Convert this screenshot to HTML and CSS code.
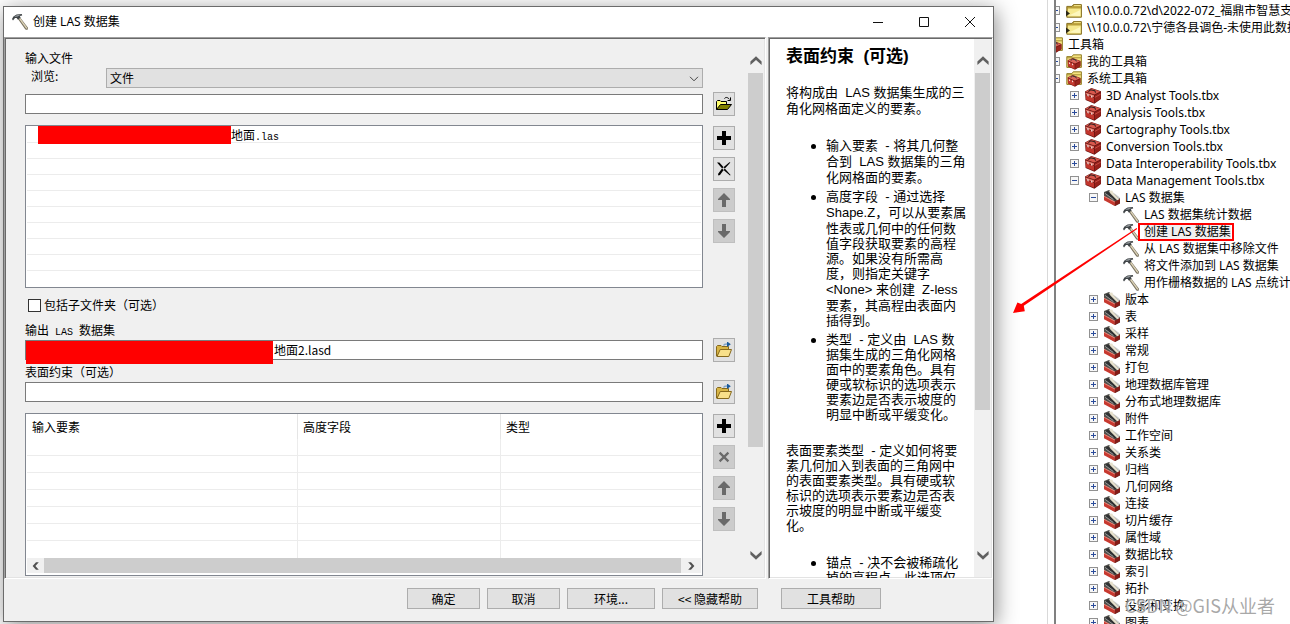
FILE: index.html
```html
<!DOCTYPE html>
<html lang="zh-CN">
<head>
<meta charset="utf-8">
<title>创建 LAS 数据集</title>
<link rel="stylesheet" href="styles.css">
</head>
<body>
<svg class="defs" aria-hidden="true">
  <symbol id="hammer" viewBox="0 0 16 16">
    <path d="M5.6 4.4 7.8 3 16 13.8 15.4 16 13.4 15.6Z" fill="#77705f"/>
    <path d="M6.8 4.4 7.8 3.6 15.2 13.8 14.4 15Z" fill="#ddd4b8"/>
    <path d="M0 5 1.4 2.4 4.6.4 9.8 0 10.2 1.4 7.8 2 8.6 3.6 6 5.8 4.6 4 3 4 1 6.6Z" fill="#3f4447"/>
    <path d="M2 3 4.8 1.2 8.6.8 5.8 2.4Z" fill="#9aa0a3"/>
  </symbol>
  <symbol id="toolbox" viewBox="0 0 16 16">
    <path d="M0 3.6 6.4 0 16 3.2V11L9.4 15.8 .6 12Z" fill="#6c1512"/>
    <path d="M.6 3.6 6.4.6 15.4 3.4 9.2 6.4Z" fill="#d9574c"/>
    <path d="M.6 4.4 9 7.2V9.2L.8 6.2Z" fill="#e07468"/>
    <path d="M.8 7 9 10V14.8L1 11.6Z" fill="#c2352c"/>
    <path d="M9.8 7.2 15.6 4.4V10.8L9.8 14.8Z" fill="#98211b"/>
    <path d="M9.8 9.4 15.6 6.2" stroke="#d0584e" stroke-width=".8"/>
    <path d="M3.4 3.6 5.4 1.8 9.8 2.8 10.6 4.6" fill="none" stroke="#332020" stroke-width="1.1"/>
    <path d="M2.4 6 3.6 6.4V8.4L2.4 8Z" fill="#fff1ee"/>
    <path d="M6.2 7.4 7.4 7.8V9.8L6.2 9.4Z" fill="#fff1ee"/>
  </symbol>
  <symbol id="toolset" viewBox="0 0 16 16">
    <path d="M0 2 5 0 16 8.4V13.4L11 16 0 9Z" fill="#51504c"/>
    <path d="M1 3 4 1.4 13 9.6 11 10.6Z" fill="#2f3132"/>
    <path d="M5 1 8.2.6 9.6 3.2 15.4 9.2 13.4 10.6 6.4 3.6Z" fill="#e6e0cc"/>
    <path d="M9 2.2 15.6 7.2 15 9Z" fill="#c9cccd"/>
    <path d="M1.2 3.4 9.4 9.6" stroke="#9b9d9d" stroke-width="1"/>
    <path d="M0 6.2 10.8 12V16L0 10.2Z" fill="#c7392f"/>
    <path d="M0 5.8 10.8 11.6V12.6L0 6.8Z" fill="#ee8b7f"/>
    <path d="M11 11.6 16 9V13.2L11 16Z" fill="#851c17"/>
  </symbol>
  <symbol id="folder" viewBox="0 0 16 16">
    <path d="M.8 3.4H6L7.4 1.6H15.4V14.2H.8Z" fill="#b99f3a" stroke="#877123" stroke-width="1"/>
    <path d="M8 2.6H14.8" stroke="#f6e68b"/>
    <path d="M2 5.4H14.8V13.6H1.4Z" fill="#f6e98f"/>
    <path d="M3 12.6 14.2 7V13Z" fill="#fdf7bd"/>
    <path d="M0 7.6 4 10.4 0 13.2Z" fill="#2b2717"/>
  </symbol>
  <symbol id="boxfolder" viewBox="0 0 16 16">
    <path d="M.8 2.6H6L7.2.8H15.4V13.4H.8Z" fill="#f4e27f" stroke="#94802a" stroke-width="1"/>
    <path d="M1 3.8H15" stroke="#a58f32"/>
    <path d="M1.6 6.2 6.8 4 14.6 7V12.2L9 15.8 2 12.4Z" fill="#7c1814"/>
    <path d="M2 6.4 6.8 4.6 14 7.2 9 9.6Z" fill="#de675c"/>
    <path d="M2 7.6 8.6 10.4V15L2.2 12Z" fill="#c43a31"/>
    <path d="M9.4 10.4 14.2 8V12L9.4 15Z" fill="#9a241d"/>
    <path d="M4.8 6.4 6.6 5 9.8 6 10.4 7.4" fill="none" stroke="#333"/>
    <path d="M3.6 8.4V10M6.6 9.6V11.2" stroke="#fbe5e1"/>
  </symbol>
  <symbol id="browse" viewBox="0 0 18 16">
    <path d="M1.5 14V4.5L2.5 3.5H6L7 4.5H13.5V7.5H7L2 14Z" fill="#d8b545" stroke="#86691c"/>
    <path d="M2 14.5 5.2 7.5H16.5L13.8 14.5Z" fill="#f8e08a" stroke="#86691c"/>
    <path d="M8.5 3.5C9.2 1.8 10.5 2 12.5 2" fill="none" stroke="#7fa3c8" stroke-width="1.4"/>
    <path d="M12-.6 15.8 2.2 12 5Z" fill="#195a9c"/>
  </symbol>
  <symbol id="open" viewBox="0 0 18 16">
    <path d="M1.5 13.5V5.5L2.5 4.5H5L6 5.5H11.5V8.5" fill="#ffff6e" stroke="#000"/>
    <path d="M1.5 13.5 5.5 8.5H16.5L12.5 13.5Z" fill="#808000" stroke="#000"/>
    <path d="M9.5 2.5C10.6 1 12.6 1 14.5 3.4M15.5 1.4V4.5H12.6" fill="none" stroke="#000"/>
  </symbol>
  <symbol id="plus" viewBox="0 0 14 14"><path d="M5 0H9V5H14V9H9V14H5V9H0V5H5Z" fill="currentColor"/></symbol>
  <symbol id="cross" viewBox="0 0 14 14">
    <path d="M0 .6H2.4L13.6 13 13 13.6 6 7.6Z M13.4.4 12.4.2 5 6.6 1 12 1.4 13.4 3 13 7 7.6Z" fill="currentColor"/>
  </symbol>
  <symbol id="cross-small" viewBox="0 0 14 14"><path d="M2.6 2.6 11.4 11.4M11.4 2.6 2.6 11.4" stroke="currentColor" stroke-width="2.2"/></symbol>
  <symbol id="up" viewBox="0 0 14 14"><path d="M7 0 13 6V7H9V14H5V7H1V6Z" fill="currentColor"/></symbol>
  <symbol id="down" viewBox="0 0 14 14"><path d="M7 14 13 8V7H9V0H5V7H1V8Z" fill="currentColor"/></symbol>
  <symbol id="chev-up" viewBox="0 0 12 9"><path d="M.4 9V5.6L6 .2 11.6 5.6V9L6 4Z" fill="#606060"/></symbol>
  <symbol id="chev-down" viewBox="0 0 12 9"><path d="M.4 0V3.4L6 8.8 11.6 3.4V0L6 5Z" fill="#606060"/></symbol>
  <symbol id="chev-left" viewBox="0 0 8 8"><path d="M6.8.2H4L.6 4 4 7.8H6.8L3.4 4Z" fill="#505050"/></symbol>
  <symbol id="chev-right" viewBox="0 0 8 8"><path d="M1.2.2H4L7.4 4 4 7.8H1.2L4.6 4Z" fill="#505050"/></symbol>
</svg>

<main class="page">
  <section class="dialog" aria-label="创建 LAS 数据集">
    <header class="titlebar">
      <svg class="title-icon"><use href="#hammer"/></svg>
      <h1>创建 LAS 数据集</h1>
      <button class="win-btn" aria-label="最小化"><svg viewBox="0 0 12 12"><path d="M1 6.5H11"/></svg></button>
      <button class="win-btn" aria-label="最大化"><svg viewBox="0 0 12 12"><path d="M1.5 1.5H10.5V10.5H1.5Z"/></svg></button>
      <button class="win-btn" aria-label="关闭"><svg viewBox="0 0 12 12"><path d="M1 1 11 11M11 1 1 11"/></svg></button>
    </header>

    <div class="panes">
      <div class="pane form-pane">
        <form class="form" id="las-form">
          <div class="label">输入文件</div>
          <div class="browse-line">
            <label for="browse-type">浏览:</label>
            <div class="select-wrap">
              <select id="browse-type"><option>文件</option></select>
              <svg viewBox="0 0 10 6"><path d="M1 .8 5 4.8 9 .8"/></svg>
            </div>
          </div>
          <div class="field-row">
            <input type="text" aria-label="输入文件路径">
            <button type="button" class="tool" aria-label="浏览"><svg class="wide"><use href="#open"/></svg></button>
          </div>
          <div class="list-row">
            <ul class="file-list">
              <li><span class="redact list-redact"></span>地面<span class="half">.las</span></li>
              <li></li><li></li><li></li><li></li><li></li><li></li><li></li><li></li>
            </ul>
            <div class="tools">
              <button type="button" class="tool" aria-label="添加"><svg><use href="#plus"/></svg></button>
              <button type="button" class="tool" aria-label="移除"><svg><use href="#cross"/></svg></button>
              <button type="button" class="tool" aria-label="上移" disabled><svg><use href="#up"/></svg></button>
              <button type="button" class="tool" aria-label="下移" disabled><svg><use href="#down"/></svg></button>
            </div>
          </div>
          <label class="check"><input type="checkbox">包括子文件夹（可选）</label>
          <label class="label" for="output">输出<span class="half"> LAS </span>数据集</label>
          <div class="field-row">
            <div class="output-wrap">
              <input type="text" id="output" class="output" value="地面2.lasd">
              <span class="redact output-redact"></span>
            </div>
            <button type="button" class="tool" aria-label="浏览输出"><svg class="wide"><use href="#browse"/></svg></button>
          </div>
          <label class="label" for="surface">表面约束（可选）</label>
          <div class="field-row">
            <input type="text" id="surface">
            <button type="button" class="tool" aria-label="浏览表面"><svg class="wide"><use href="#browse"/></svg></button>
          </div>
          <div class="list-row">
            <div class="grid-box">
              <table>
                <colgroup><col class="c1"><col class="c2"><col></colgroup>
                <thead><tr><th>输入要素</th><th>高度字段</th><th>类型</th></tr></thead>
                <tbody>
                  <tr><td></td><td></td><td></td></tr><tr><td></td><td></td><td></td></tr>
                  <tr><td></td><td></td><td></td></tr><tr><td></td><td></td><td></td></tr>
                  <tr><td></td><td></td><td></td></tr><tr><td></td><td></td><td></td></tr>
                  <tr><td></td><td></td><td></td></tr>
                </tbody>
              </table>
              <div class="hscroll">
                <button type="button" aria-label="向左"><svg><use href="#chev-left"/></svg></button>
                <span class="hthumb"></span>
                <button type="button" aria-label="向右"><svg><use href="#chev-right"/></svg></button>
              </div>
            </div>
            <div class="tools">
              <button type="button" class="tool" aria-label="添加"><svg><use href="#plus"/></svg></button>
              <button type="button" class="tool" aria-label="移除" disabled><svg><use href="#cross-small"/></svg></button>
              <button type="button" class="tool" aria-label="上移" disabled><svg><use href="#up"/></svg></button>
              <button type="button" class="tool" aria-label="下移" disabled><svg><use href="#down"/></svg></button>
            </div>
          </div>
        </form>
        <div class="vscroll">
          <button aria-label="向上滚动"><svg><use href="#chev-up"/></svg></button>
          <div class="track"><div class="thumb form-thumb"></div></div>
          <button aria-label="向下滚动"><svg><use href="#chev-down"/></svg></button>
        </div>
      </div>

      <aside class="pane help-pane">
        <div class="help">
          <h2>表面约束&nbsp; (可选)</h2>
          <p>将构成由&nbsp; <span class="lat">LAS</span> 数据集生成的三<br>角化网格面定义的要素。</p>
          <ul>
            <li>输入要素&nbsp; - 将其几何整<br>合到&nbsp; <span class="lat">LAS</span> 数据集的三角<br>化网格面的要素。</li>
            <li>高度字段&nbsp; - 通过选择<br><span class="lat">Shape.Z</span>，可以从要素属<br>性表或几何中的任何数<br>值字段获取要素的高程<br>源。如果没有所需高<br>度，则指定关键字<br><span class="lat">&lt;None&gt;</span> 来创建&nbsp; <span class="lat">Z-less</span><br>要素，其高程由表面内<br>插得到。</li>
            <li>类型&nbsp; - 定义由&nbsp; LAS 数<br>据集生成的三角化网格<br>面中的要素角色。具有<br>硬或软标识的选项表示<br>要素边是否表示坡度的<br>明显中断或平缓变化。</li>
          </ul>
          <p>表面要素类型&nbsp; - 定义如何将要<br>素几何加入到表面的三角网中<br>的表面要素类型。具有硬或软<br>标识的选项表示要素边是否表<br>示坡度的明显中断或平缓变<br>化。</p>
          <ul>
            <li>锚点&nbsp; - 决不会被稀疏化<br>掉的高程点。此选项仅</li>
          </ul>
        </div>
        <div class="vscroll">
          <button aria-label="向上滚动"><svg><use href="#chev-up"/></svg></button>
          <div class="track"><div class="thumb help-thumb"></div></div>
          <button aria-label="向下滚动"><svg><use href="#chev-down"/></svg></button>
        </div>
      </aside>
    </div>

    <footer class="footer">
      <button class="cmd small">确定</button>
      <button class="cmd small">取消</button>
      <button class="cmd env">环境...</button>
      <button class="cmd hide">&lt;&lt; 隐藏帮助</button>
      <button class="cmd help-btn">工具帮助</button>
    </footer>
  </section>

  <div class="gutter"></div>

  <nav class="catalog" aria-label="目录树">
    <ul class="tree">
      <li><div class="row"><button class="exp plus" aria-label="展开"></button><svg><use href="#folder"/></svg><span>\\10.0.0.72\d\2022-072_福鼎市智慧支</span></div></li>
      <li><div class="row"><button class="exp plus" aria-label="展开"></button><svg><use href="#folder"/></svg><span>\\10.0.0.72\宁德各县调色-未使用此数据</span></div></li>
      <li class="root"><div class="row"><button class="exp" aria-label="折叠"></button><svg><use href="#boxfolder"/></svg><span>工具箱</span></div></li>
      <li><div class="row"><button class="exp plus" aria-label="展开"></button><svg><use href="#boxfolder"/></svg><span>我的工具箱</span></div></li>
      <li><div class="row"><button class="exp" aria-label="折叠"></button><svg><use href="#boxfolder"/></svg><span>系统工具箱</span></div>
        <ul>
          <li><div class="row"><button class="exp plus" aria-label="展开"></button><svg><use href="#toolbox"/></svg><span>3D Analyst Tools.tbx</span></div></li>
          <li><div class="row"><button class="exp plus" aria-label="展开"></button><svg><use href="#toolbox"/></svg><span>Analysis Tools.tbx</span></div></li>
          <li><div class="row"><button class="exp plus" aria-label="展开"></button><svg><use href="#toolbox"/></svg><span>Cartography Tools.tbx</span></div></li>
          <li><div class="row"><button class="exp plus" aria-label="展开"></button><svg><use href="#toolbox"/></svg><span>Conversion Tools.tbx</span></div></li>
          <li><div class="row"><button class="exp plus" aria-label="展开"></button><svg><use href="#toolbox"/></svg><span>Data Interoperability Tools.tbx</span></div></li>
          <li><div class="row"><button class="exp" aria-label="折叠"></button><svg><use href="#toolbox"/></svg><span>Data Management Tools.tbx</span></div>
            <ul>
              <li><div class="row"><button class="exp" aria-label="折叠"></button><svg><use href="#toolset"/></svg><span>LAS 数据集</span></div>
                <ul>
                  <li><div class="row leaf"><svg><use href="#hammer"/></svg><span>LAS 数据集统计数据</span></div></li>
                  <li><div class="row leaf"><svg><use href="#hammer"/></svg><span class="selected">创建 LAS 数据集</span></div></li>
                  <li><div class="row leaf"><svg><use href="#hammer"/></svg><span>从 LAS 数据集中移除文件</span></div></li>
                  <li><div class="row leaf"><svg><use href="#hammer"/></svg><span>将文件添加到 LAS 数据集</span></div></li>
                  <li><div class="row leaf"><svg><use href="#hammer"/></svg><span>用作栅格数据的 LAS 点统计</span></div></li>
                </ul>
              </li>
              <li><div class="row"><button class="exp plus" aria-label="展开"></button><svg><use href="#toolset"/></svg><span>版本</span></div></li>
              <li><div class="row"><button class="exp plus" aria-label="展开"></button><svg><use href="#toolset"/></svg><span>表</span></div></li>
              <li><div class="row"><button class="exp plus" aria-label="展开"></button><svg><use href="#toolset"/></svg><span>采样</span></div></li>
              <li><div class="row"><button class="exp plus" aria-label="展开"></button><svg><use href="#toolset"/></svg><span>常规</span></div></li>
              <li><div class="row"><button class="exp plus" aria-label="展开"></button><svg><use href="#toolset"/></svg><span>打包</span></div></li>
              <li><div class="row"><button class="exp plus" aria-label="展开"></button><svg><use href="#toolset"/></svg><span>地理数据库管理</span></div></li>
              <li><div class="row"><button class="exp plus" aria-label="展开"></button><svg><use href="#toolset"/></svg><span>分布式地理数据库</span></div></li>
              <li><div class="row"><button class="exp plus" aria-label="展开"></button><svg><use href="#toolset"/></svg><span>附件</span></div></li>
              <li><div class="row"><button class="exp plus" aria-label="展开"></button><svg><use href="#toolset"/></svg><span>工作空间</span></div></li>
              <li><div class="row"><button class="exp plus" aria-label="展开"></button><svg><use href="#toolset"/></svg><span>关系类</span></div></li>
              <li><div class="row"><button class="exp plus" aria-label="展开"></button><svg><use href="#toolset"/></svg><span>归档</span></div></li>
              <li><div class="row"><button class="exp plus" aria-label="展开"></button><svg><use href="#toolset"/></svg><span>几何网络</span></div></li>
              <li><div class="row"><button class="exp plus" aria-label="展开"></button><svg><use href="#toolset"/></svg><span>连接</span></div></li>
              <li><div class="row"><button class="exp plus" aria-label="展开"></button><svg><use href="#toolset"/></svg><span>切片缓存</span></div></li>
              <li><div class="row"><button class="exp plus" aria-label="展开"></button><svg><use href="#toolset"/></svg><span>属性域</span></div></li>
              <li><div class="row"><button class="exp plus" aria-label="展开"></button><svg><use href="#toolset"/></svg><span>数据比较</span></div></li>
              <li><div class="row"><button class="exp plus" aria-label="展开"></button><svg><use href="#toolset"/></svg><span>索引</span></div></li>
              <li><div class="row"><button class="exp plus" aria-label="展开"></button><svg><use href="#toolset"/></svg><span>拓扑</span></div></li>
              <li><div class="row"><button class="exp plus" aria-label="展开"></button><svg><use href="#toolset"/></svg><span>投影和变换</span></div></li>
              <li><div class="row"><button class="exp plus" aria-label="展开"></button><svg><use href="#toolset"/></svg><span>图表</span></div></li>
            </ul>
          </li>
        </ul>
      </li>
    </ul>
  </nav>

  <svg class="arrow" viewBox="0 0 126 88" aria-hidden="true">
    <path d="M124.6 3 125.2 4 11.8 80.8 12.8 86.2 1 88 5.4 77.6 9.2 79Z" fill="#f00"/>
  </svg>
  <div class="watermark">CSDN @GIS从业者</div>
</main>
</body>
</html>
```

FILE: styles.css
```css
* { box-sizing: border-box; }
body {
  margin: 0;
  background: #fff;
  color: #000;
  font: 12px/16px "Noto Sans CJK SC", sans-serif;
}
button, input, select { font: inherit; color: inherit; margin: 0; padding: 0; border-radius: 0; }
button { border: 0; background: none; }
ul { list-style: none; margin: 0; padding: 0; }
h1, h2, p { margin: 0; }
svg { display: block; flex: none; }
.defs { position: absolute; width: 0; height: 0; }

.page {
  position: relative;
  display: grid;
  grid-template-columns: minmax(0, 1fr) 54px 242px;
  grid-template-rows: minmax(0, 1fr);
  height: 100vh;
  overflow: hidden;
}

/* dialog window */
.dialog {
  display: flex;
  flex-direction: column;
  margin: 6px 0 2px 3px;
  border: 1px solid #6b6b6b;
  background: #f0f0f0;
  box-shadow: 2px 4px 20px rgba(0, 0, 0, .45);
}
.titlebar {
  flex: none;
  display: flex;
  align-items: center;
  height: 30px;
  padding-left: 8px;
  background: #fff;
}
.title-icon { width: 16px; height: 16px; margin-right: 5px; }
.titlebar h1 { flex: 1; font: 12px/16px "Noto Sans", "Noto Sans CJK SC", sans-serif; }
.win-btn { display: flex; justify-content: center; width: 46px; }
.win-btn svg { width: 12px; height: 12px; fill: none; stroke: #111; }

.panes {
  flex: 1;
  min-height: 0;
  display: grid;
  grid-template-columns: minmax(0, 1fr) 225px;
  grid-template-rows: minmax(0, 1fr);
  gap: 2px;
}
.pane {
  display: flex;
  min-height: 0;
  overflow: hidden;
  border: 1px solid;
  border-color: #a0a0a0 #fff #fff #a0a0a0;
  box-shadow: inset 1px 1px #696969, inset -1px -1px #e3e3e3;
}
.form {
  flex: 1;
  min-width: 0;
  display: flex;
  flex-direction: column;
  padding: 12px 13px 0 20px;
}
.label { display: block; height: 16px; }
.half { font-family: "Liberation Mono", monospace; font-size: 10px; white-space: pre; }
.browse-line { display: flex; margin: 2px 32px 4px 6px; }
.browse-line label { width: 75px; }
.select-wrap { position: relative; flex: 1; }
.select-wrap select {
  display: block;
  width: 100%;
  height: 20px;
  padding-left: 3px;
  border: 1px solid #adadad;
  background: #e1e1e1;
  appearance: none;
}
.select-wrap svg {
  position: absolute;
  right: 4px;
  top: 8px;
  width: 10px;
  height: 6px;
  fill: none;
  stroke: #444;
  pointer-events: none;
}
.field-row { display: grid; grid-template-columns: minmax(0, 1fr) 22px; gap: 10px; align-items: center; margin-bottom: 9px; }
.field-row input {
  display: block;
  width: 100%;
  height: 20px;
  padding: 0 3px;
  border: 1px solid #7a7a7a;
  background: #fff;
}
.output-wrap { position: relative; }
.field-row .output { padding: 0 3px 2px 248px; }
.field-row:has(.output) { margin-bottom: 2px; }
.redact { background: #f00; position: absolute; }
.output-redact { left: 1px; top: 1px; width: 247px; height: 23px; }
.tool {
  display: flex;
  align-items: center;
  justify-content: center;
  width: 22px;
  height: 24px;
  border: 1px solid #adadad;
  background: #e1e1e1;
}
.tool:disabled { background: #ccc; border-color: #bfbfbf; color: #6a6a6a; }
.tool svg { width: 14px; height: 14px; }
.tool svg.wide { width: 18px; height: 16px; overflow: visible; }
.list-row { display: grid; grid-template-columns: minmax(0, 1fr) 22px; gap: 10px; height: 163px; }
.tools { display: flex; flex-direction: column; gap: 7px; padding-top: 1px; }
.file-list {
  padding: 0 1px;
  border: 1px solid #828790;
  background: #fff;
}
.file-list li { height: 16px; border-bottom: 1px solid #ececec; }
.file-list li:first-child { position: relative; height: 17px; padding-left: 204px; line-height: 18px; }
.list-redact { left: 11px; top: 0; width: 193px; height: 18px; }
.check { display: flex; align-items: center; height: 14px; margin: 10px 0 10px 3px; }
.check input { appearance: none; width: 13px; height: 13px; margin-right: 3px; border: 1px solid #333; background: #fff; }

.grid-box { padding: 0 1px; border: 1px solid #828790; background: #fff; overflow: hidden; }
.grid-box table { width: 100%; table-layout: fixed; border-collapse: separate; border-spacing: 0; }
.c1 { width: 271px; }
.c2 { width: 203px; }
th { height: 25px; padding: 0 0 0 5px; text-align: left; font-weight: 400; border-right: 1px solid #e5e5e5; }
td { height: 17px; padding: 0; border-right: 1px solid #ececec; border-bottom: 1px solid #ececec; }
th:last-child, td:last-child { border-right: 0; }
tbody tr:last-child td { border-bottom: 0; }
.hscroll { display: flex; height: 15px; background: #f0f0f0; }
.hscroll button { display: flex; align-items: center; justify-content: center; width: 17px; }
.hscroll button:last-child { width: 20px; }
.hscroll svg { width: 8px; height: 8px; }
.hthumb { flex: 1; background: #cdcdcd; }

.vscroll { flex: none; display: flex; flex-direction: column; width: 17px; margin: 1px 0; padding: 13px 2px 13px 0; background: #f0f0f0; }
.vscroll button { display: flex; align-items: center; justify-content: center; width: 15px; height: 17px; }
.vscroll svg { width: 12px; height: 9px; }
.track { flex: 1; padding: 4px 0 0; }
.thumb { background: #cdcdcd; }
.form-pane .vscroll { margin-right: 1px; width: 16px; padding-right: 1px; }
.form-thumb { height: 79%; }
.help-thumb { height: 71%; }

/* help text */
.help-pane { background: #fff; }
.help-pane .vscroll { margin-right: 1px; padding: 13px 1px; }
.help { flex: 1; min-width: 0; padding: 9px 0 0 17px; overflow: hidden; white-space: nowrap; font: 13px/15px "Liberation Sans", "Noto Sans CJK SC", sans-serif; }
.help h2 { font-size: 17px; line-height: 20px; font-weight: 700; margin-bottom: 17px; }
.help p { margin-bottom: 22px; }
.help ul { margin-bottom: 21px; padding-left: 40px; }
.help li { position: relative; margin-bottom: 4px; }
.help li::before { content: ""; position: absolute; left: -15px; top: 6px; width: 5px; height: 5px; border-radius: 50%; background: #000; }
.lat { line-height: 17px; }

.footer { flex: none; display: flex; justify-content: flex-end; gap: 7px; height: 42px; padding: 9px 112px 0 0; }
.cmd { height: 21px; border: 1px solid #adadad; background: #e1e1e1; line-height: 18px; }
.small { width: 73px; }
.env { width: 88px; }
.hide { width: 96px; }
.help-btn { width: 100px; margin-left: 16px; }

/* catalog tree */
.gutter { border-right: 1px solid #d9d9d9; }
.catalog {
  margin-left: 6px;
  border-left: 2px solid #808080;
  overflow: hidden;
  background: #fff;
  font: 12px/17px "Noto Sans", "Noto Sans CJK SC", sans-serif;
  white-space: nowrap;
}
.tree { margin: 2px 0 0 -5px; }
.tree ul { padding-left: 19px; }
.root { margin-left: -19px; }
.row { display: flex; align-items: center; height: 17px; }
.row svg { width: 16px; height: 16px; margin-right: 5px; }
.leaf { padding-left: 15px; }
.exp {
  flex: none;
  width: 9px;
  height: 9px;
  margin-right: 6px;
  border: 1px solid #919191;
  background: linear-gradient(#2b4c9b, #2b4c9b) center / 5px 1px no-repeat, #f7f7f7;
}
.exp.plus {
  background:
    linear-gradient(#2b4c9b, #2b4c9b) center / 5px 1px no-repeat,
    linear-gradient(#2b4c9b, #2b4c9b) center / 1px 5px no-repeat, #f7f7f7;
}
.selected { position: relative; background: #f0f0f0; }
.selected::after { content: ""; position: absolute; inset: 0 -3px -1px -6px; border: 2px solid #f00; }

.arrow { position: absolute; right: 152px; top: 225px; width: 126px; height: 88px; }
.watermark {
  position: absolute;
  right: 15px;
  bottom: 7px;
  font-size: 18px;
  line-height: 24px;
  color: rgba(140, 140, 140, .75);
  text-shadow: 1px 1px 1px #fff;
}
```
